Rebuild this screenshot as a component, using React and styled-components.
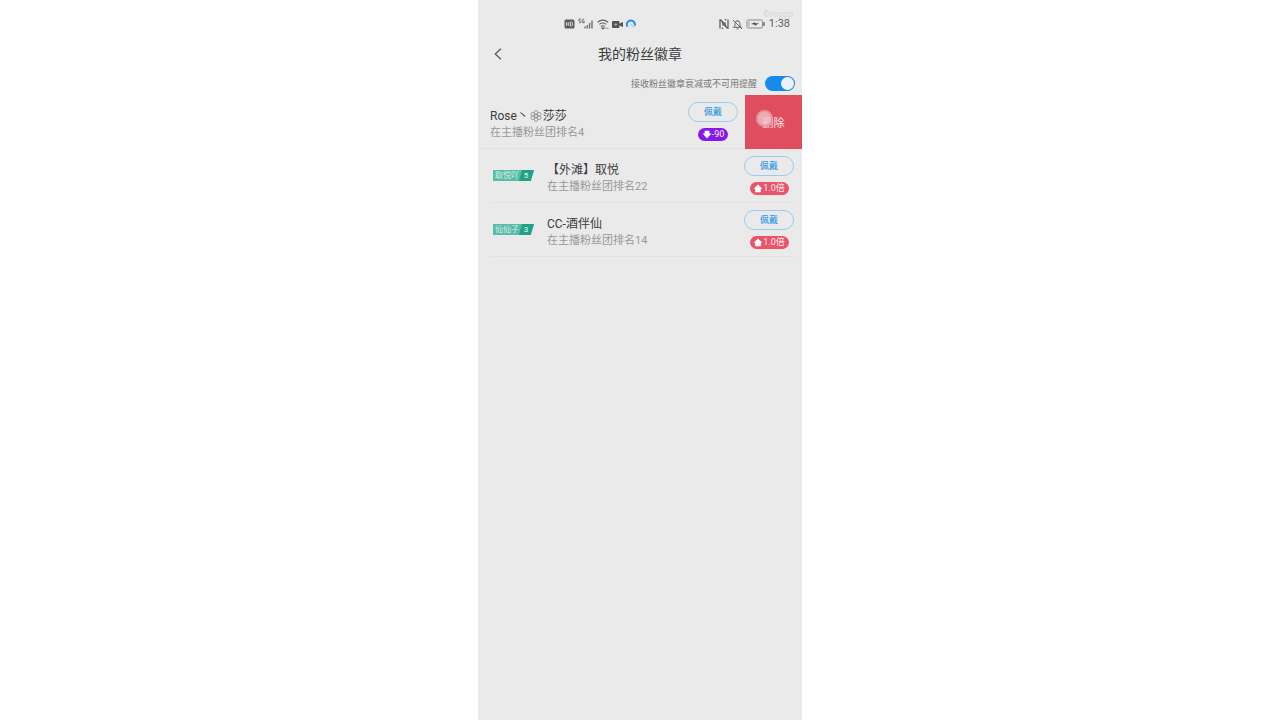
import React, { useState } from "react";
import styled, { createGlobalStyle } from "styled-components";

const GlobalStyle = createGlobalStyle`
  * {
    box-sizing: border-box;
  }
  body {
    margin: 0;
    background: #fff;
    font-family: Roboto, "Noto Sans CJK SC", sans-serif;
  }
  button {
    font-family: inherit;
    cursor: pointer;
  }
  h1, h2, p, ul {
    margin: 0;
    padding: 0;
    font-weight: 400;
  }
`;

const Phone = styled.main`
  width: 45vh;
  min-width: 320px;
  min-height: 100vh;
  margin: 0 auto;
  background: #eaeaea;
  color: #3c3c3c;
`;

const StatusBar = styled.div`
  position: relative;
  display: flex;
  align-items: center;
  justify-content: space-between;
  height: 34px;
  padding: 14px 12px 0 86px;
  color: #606060;
`;

const StatusIcons = styled.div`
  display: flex;
  align-items: center;
  gap: 3px;
`;

const Clock = styled.time`
  font-size: 11px;
  line-height: 16px;
`;

const Watermark = styled.span`
  position: absolute;
  top: 9px;
  right: 9px;
  font-size: 9px;
  line-height: 11px;
  color: #d6d6d6;
`;

const Header = styled.header`
  display: grid;
  grid-template-columns: 40px 1fr 40px;
  align-items: center;
  height: 40px;
`;

const BackButton = styled.button`
  display: flex;
  align-items: center;
  justify-content: center;
  height: 36px;
  padding: 0;
  border: 0;
  background: none;
  color: #555;
`;

const Title = styled.h1`
  font-size: 14px;
  line-height: 20px;
  text-align: center;
`;

const Reminder = styled.label`
  display: flex;
  align-items: center;
  justify-content: flex-end;
  gap: 8px;
  height: 21px;
  padding-right: 7px;
  padding-bottom: 2px;
  font-size: 9px;
  color: #777;
`;

const Toggle = styled.input`
  appearance: none;
  display: flex;
  align-items: center;
  width: 30px;
  height: 15px;
  margin: 0;
  padding: 1px;
  border-radius: 8px;
  background: #b8b8b8;
  cursor: pointer;
  &:before {
    content: "";
    width: 13px;
    height: 13px;
    border-radius: 50%;
    background: #edf2f6;
  }
  &:checked {
    justify-content: flex-end;
    background: #158ceb;
  }
`;

const BadgeList = styled.ul`
  list-style: none;
`;

const Row = styled.li`
  display: flex;
  height: 54px;
  padding: ${(props) => (props.$open ? "0" : "0 8px 0 12px")};
`;

const RowBody = styled.div`
  display: flex;
  flex: 1;
  min-width: 0;
  padding-left: ${(props) => (props.$open ? 12 : 0)}px;
  border-bottom: 1px solid #e3e3e3;
`;

const MedalSlot = styled.div`
  display: flex;
  align-items: center;
  width: 57px;
  padding-left: 3px;
`;

const Medal = styled.div`
  display: flex;
  width: 41px;
  height: 11px;
  background: #5bbba9;
  clip-path: polygon(0 0, 100% 0, 92% 100%, 0 100%);
  color: #d5efea;
  font-size: 8px;
  line-height: 11px;
  white-space: nowrap;
`;

const MedalName = styled.span`
  flex: 1;
  padding-left: 2px;
`;

const MedalLevel = styled.span`
  width: 16px;
  padding-right: 1px;
  background: #20a287;
  clip-path: polygon(20% 0, 100% 0, 100% 100%, 0 100%);
  color: #e9f7f4;
  text-align: center;
`;

const Info = styled.div`
  flex: 1;
  min-width: 0;
  padding-top: 12px;
`;

const Streamer = styled.h2`
  font-size: 12px;
  line-height: 18px;
  white-space: nowrap;
`;

const Flower = styled.svg`
  width: 12px;
  height: 12px;
  margin: 0 1px;
  vertical-align: -2px;
`;

const Rank = styled.p`
  font-size: 11px;
  line-height: 15px;
  color: #999;
  white-space: nowrap;
`;

const Actions = styled.div`
  display: flex;
  flex-direction: column;
  align-items: center;
  gap: 6px;
  width: 50px;
  padding-top: 7px;
  margin-right: ${(props) => (props.$open ? 7 : 0)}px;
`;

const WearButton = styled.button`
  width: 50px;
  height: 20px;
  padding: 0;
  border: 1px solid #9accf0;
  border-radius: 10px;
  background: none;
  color: #359ae6;
  font-size: 9px;
  font-weight: 500;
  line-height: 16px;
`;

const Boost = styled.span`
  display: flex;
  align-items: center;
  justify-content: center;
  min-width: ${(props) => (props.$down ? 30 : 39)}px;
  height: 13px;
  border-radius: 7px;
  background: ${(props) => (props.$down ? "#8619e6" : "#ea5368")};
  color: #fbeef4;
  font-size: 9px;
  line-height: 13px;
`;

const DeleteButton = styled.button`
  position: relative;
  width: 57px;
  padding: 0;
  border: 0;
  background: #df4e5e;
  color: #fbe9eb;
  font-size: 11px;
`;

const TouchDot = styled.span`
  position: absolute;
  top: 15px;
  left: 11px;
  width: 17px;
  height: 17px;
  border: 2px solid rgba(234, 140, 150, 0.8);
  border-radius: 50%;
  background: rgba(238, 196, 201, 0.8);
`;

const badges = [
  { id: 1, before: "Rose丶", flower: true, name: "莎莎", rank: 4, boost: "-90", down: true, open: true },
  { id: 2, name: "【外滩】取悦", rank: 22, boost: "1.0倍", medal: "取悦吖", level: 5 },
  { id: 3, name: "CC-酒伴仙", rank: 14, boost: "1.0倍", medal: "仙仙子", level: 3 },
];

const HdIcon = () => (
  <svg width="11" height="10" viewBox="0 0 11 10">
    <rect x="0.5" y="0.5" width="10" height="9" rx="1.5" fill="#5c5c5c" />
    <path d="M2.5 3v4M4.8 3v4M2.5 5h2.3M6.5 3v4h.8q1.4 0 1.4-2T7.3 3z" fill="none" stroke="#d8d8d8" strokeWidth="0.9" />
  </svg>
);

const SignalIcon = () => (
  <svg width="16" height="12" viewBox="0 0 16 12">
    <path d="M3 1H1v2h1.2q.8 0 .8.8T2 4.8H1M6.2 1.3H5q-.7 0-.7.8v2q0 .7.7.7h1.2V3.2h-.8" fill="none" stroke="#666" strokeWidth="0.9" />
    <path d="M7 8.5v2M9.3 7v3.5M11.6 5v5.5M14 2.5v8" stroke="#777" strokeWidth="1.5" />
  </svg>
);

const WifiIcon = () => (
  <svg width="12" height="12" viewBox="0 0 12 12" fill="none" stroke="#606060" strokeWidth="1.1">
    <path d="M.6 4.2Q5.8 0 11.2 4.2M2.4 6.4Q5.8 3.7 9.3 6.4M4.1 8.5Q5.8 7 7.6 8.5" />
    <path d="M5 10l.9.9.9-.9zM8.2 10.2h1.1M10.3 10.2h1.1" fill="#606060" />
  </svg>
);

const VideoIcon = () => (
  <svg width="11" height="9" viewBox="0 0 11 9">
    <rect x="0" y="1" width="7.5" height="7" rx="1" fill="#555" />
    <path d="M7 4L11 1.8v5.4L7 5z" fill="#555" />
    <path d="M3.8 3v3M2.3 4.5h3" stroke="#bbb" strokeWidth="0.8" />
  </svg>
);

const BrowserIcon = () => (
  <svg width="10" height="10" viewBox="0 0 10 10">
    <circle cx="5" cy="5" r="4.8" fill="#dceaf5" />
    <path d="M1.5 7.6A4 4 0 1 1 8.7 6.6" fill="none" stroke="#278fe5" strokeWidth="2" />
    <path d="M5.2 5.2Q5.5 8 8.5 7.8" fill="none" stroke="#9bcaf0" strokeWidth="1" />
  </svg>
);

const NfcIcon = () => (
  <svg width="10" height="10" viewBox="0 0 10 10" fill="none" stroke="#606060" strokeWidth="1.3">
    <path d="M1 9.5V.8h.7L6 6.8V3.2" />
    <path d="M9 .5v8.7h-.7L4 3.2v3.6" />
    <path d="M2.7 9.3h1.5M5.8.7h1.5" />
  </svg>
);

const MuteIcon = () => (
  <svg width="11" height="11" viewBox="0 0 11 11" fill="none" stroke="#666" strokeWidth="1">
    <path d="M1.5 8.3h8L8 6.8V4.5Q8 2 5.5 2T3 4.5v2.3zM4.5 9.8h2M5.5 .8V2M1 1l9 9" />
  </svg>
);

const BatteryIcon = () => (
  <svg width="20" height="10" viewBox="0 0 20 10">
    <rect x="1" y="1" width="15.5" height="8" rx="1.5" fill="none" stroke="#8a8a8a" />
    <path d="M18 3v4" stroke="#666" strokeWidth="1.4" />
    <path d="M3 2.5v5" stroke="#999" />
    <path d="M5 5l4-1.8v1.1h4L9 6.8V5.7z" fill="#4c4c4c" />
  </svg>
);

const BoostArrow = ({ down }) => (
  <svg width="10" height="9" viewBox="0 0 10 9" fill="#fff">
    {down ? (
      <path d="M2.6.7h4.8v2.8h2L5 8.4.6 3.5h2z" />
    ) : (
      <path d="M5 .6l4.4 4.2H7.8v3.4H2.2V4.8H.6z" />
    )}
  </svg>
);

const FlowerMark = () => (
  <Flower viewBox="0 0 12 12" fill="none" stroke="#888" strokeWidth="0.8" aria-hidden="true">
    <circle cx="6" cy="6" r="1.5" />
    <circle cx="6" cy="2.4" r="1.8" />
    <circle cx="9.2" cy="4.3" r="1.8" />
    <circle cx="9.2" cy="7.8" r="1.8" />
    <circle cx="6" cy="9.6" r="1.8" />
    <circle cx="2.8" cy="7.8" r="1.8" />
    <circle cx="2.8" cy="4.3" r="1.8" />
  </Flower>
);

const BadgeRow = ({ badge }) => (
  <Row $open={badge.open}>
    <RowBody $open={badge.open}>
      {badge.medal && (
        <MedalSlot>
          <Medal>
            <MedalName>{badge.medal}</MedalName>
            <MedalLevel>{badge.level}</MedalLevel>
          </Medal>
        </MedalSlot>
      )}
      <Info>
        <Streamer>
          {badge.before}
          {badge.flower && <FlowerMark />}
          {badge.name}
        </Streamer>
        <Rank>在主播粉丝团排名{badge.rank}</Rank>
      </Info>
      <Actions $open={badge.open}>
        <WearButton>佩戴</WearButton>
        <Boost $down={badge.down}>
          <BoostArrow down={badge.down} />
          {badge.boost}
        </Boost>
      </Actions>
    </RowBody>
    {badge.open && (
      <DeleteButton>
        删除
        <TouchDot />
      </DeleteButton>
    )}
  </Row>
);

const App = () => {
  const [remind, setRemind] = useState(true);

  return (
    <>
      <GlobalStyle />
      <Phone>
        <StatusBar>
          <StatusIcons>
            <HdIcon />
            <SignalIcon />
            <WifiIcon />
            <VideoIcon />
            <BrowserIcon />
          </StatusIcons>
          <StatusIcons>
            <NfcIcon />
            <MuteIcon />
            <BatteryIcon />
            <Clock>1:38</Clock>
          </StatusIcons>
          <Watermark>©mgpp</Watermark>
        </StatusBar>
        <Header>
          <BackButton aria-label="返回">
            <svg width="8" height="12" viewBox="0 0 8 12" fill="none" stroke="currentColor" strokeWidth="1.2">
              <path d="M7 .8L1.2 6 7 11.2" />
            </svg>
          </BackButton>
          <Title>我的粉丝徽章</Title>
        </Header>
        <Reminder>
          接收粉丝徽章衰减或不可用提醒
          <Toggle type="checkbox" checked={remind} onChange={(e) => setRemind(e.target.checked)} />
        </Reminder>
        <BadgeList>
          {badges.map((badge) => (
            <BadgeRow key={badge.id} badge={badge} />
          ))}
        </BadgeList>
      </Phone>
    </>
  );
};

export default App;
